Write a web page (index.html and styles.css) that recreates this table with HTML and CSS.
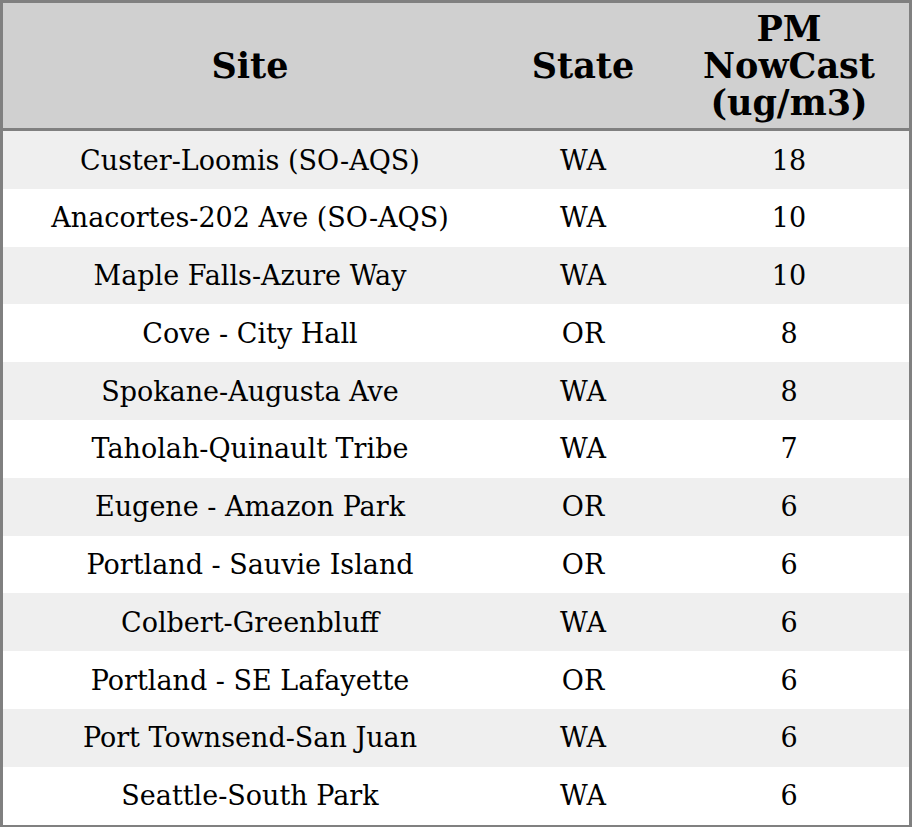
FILE: index.html
```html
<!DOCTYPE html>
<html>
<head>
<meta charset="utf-8">
<link rel="stylesheet" href="styles.css">
</head>
<body>
<table class="aq">
  <colgroup><col class="c-site"><col class="c-state"><col class="c-pm"></colgroup>
  <thead>
    <tr><th>Site</th><th>State</th><th>PM<br>NowCast<br>(ug/m3)</th></tr>
  </thead>
  <tbody>
    <tr><td>Custer-Loomis (SO-AQS)</td><td>WA</td><td>18</td></tr>
    <tr><td>Anacortes-202 Ave (SO-AQS)</td><td>WA</td><td>10</td></tr>
    <tr><td>Maple Falls-Azure Way</td><td>WA</td><td>10</td></tr>
    <tr><td>Cove - City Hall</td><td>OR</td><td>8</td></tr>
    <tr><td>Spokane-Augusta Ave</td><td>WA</td><td>8</td></tr>
    <tr><td>Taholah-Quinault Tribe</td><td>WA</td><td>7</td></tr>
    <tr><td>Eugene - Amazon Park</td><td>OR</td><td>6</td></tr>
    <tr><td>Portland - Sauvie Island</td><td>OR</td><td>6</td></tr>
    <tr><td>Colbert-Greenbluff</td><td>WA</td><td>6</td></tr>
    <tr><td>Portland - SE Lafayette</td><td>OR</td><td>6</td></tr>
    <tr><td>Port Townsend-San Juan</td><td>WA</td><td>6</td></tr>
    <tr><td>Seattle-South Park</td><td>WA</td><td>6</td></tr>
  </tbody>
</table>
</body>
</html>
```
FILE: styles.css
```css
html, body { margin: 0; padding: 0; background: #ffffff; }
.aq {
  width: 912px;
  border: 3px solid #808080;
  border-spacing: 0;
  border-collapse: separate;
  font-family: "DejaVu Serif", serif;
  color: #000;
  table-layout: fixed;
}
.c-site { width: 494px; }
.c-state { width: 172px; }
.c-pm { width: 240px; }
.aq th {
  background: #d0d0d0;
  font-weight: bold;
  font-size: 35px;
  line-height: 37px;
  padding: 7px 0;
  height: 111px;
  border-bottom: 3px solid #808080;
  text-align: center;
  vertical-align: middle;
}
.aq td {
  font-size: 27px;
  line-height: 31.8px;
  padding: 13.5px 0 12.5px;
  text-align: center;
  vertical-align: middle;
}
.aq tbody tr:nth-child(odd) td { background: #efefef; }
```
